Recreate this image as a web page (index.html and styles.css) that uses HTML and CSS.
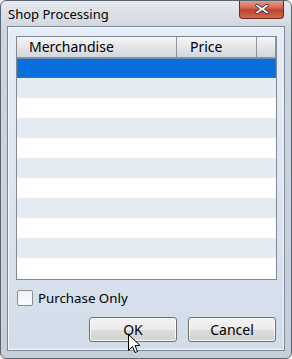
FILE: index.html
```html
<!doctype html>
<html>
	<head>
		<title>Shop Processing</title>
		<link rel="stylesheet" href="styles.css">
	</head>
	<body>
		<div class="window">
			<div class="titlebar">
				<span class="title">Shop Processing</span>
				<div class="close">
					<svg width="20" height="12" viewBox="0 0 20 12">
						<path d="M5 1 L10 4.5 L15 1 L17 2.5 L12.5 6 L17 9.5 L15 11 L10 7.5 L5 11 L3 9.5 L7.5 6 L3 2.5 Z" fill="#fff" stroke="#3a3a3a" stroke-width="1" stroke-linejoin="round"/>
					</svg>
				</div>
			</div>
			<div class="client">
				<div class="list">
					<div class="header">
						<div class="col c1">Merchandise</div>
						<div class="col c2">Price</div>
						<div class="col c3"></div>
					</div>
					<div class="row sel"></div>
					<div class="row alt"></div>
					<div class="row"></div>
					<div class="row alt"></div>
					<div class="row"></div>
					<div class="row alt"></div>
					<div class="row"></div>
					<div class="row alt"></div>
					<div class="row"></div>
					<div class="row alt"></div>
					<div class="row"></div>
				</div>
				<label class="check"><span class="box"></span>Purchase Only</label>
				<div class="buttons">
					<button class="btn">OK</button>
					<button class="btn">Cancel</button>
				</div>
			</div>
			<svg class="cursor" width="13" height="20" viewBox="0 0 13 20">
				<path d="M0.5 0.5 L0.5 16.5 L4.5 12.5 L7 18.5 L9.5 17.5 L7 11.5 L12 11.5 Z" fill="#fff" stroke="#000" stroke-width="1" stroke-linejoin="miter"/>
			</svg>
		</div>
	</body>
</html>
```
FILE: styles.css
```css
* {
	margin: 0px;
	padding: 0px;
	box-sizing: border-box;
}
body {
	font-family: "Noto Sans", "Open Sans", sans-serif;
	background: #fff;
}
.window {
	position: relative;
	width: 292px;
	height: 359px;
	border: 1px solid #5a6470;
	border-radius: 6px;
	background: linear-gradient(#e6e9ed, #cfd5dd 30px, #c6ced8);
	padding: 0px 6px 7px 6px;
	display: flex;
	flex-direction: column;
	overflow: hidden;
}
.titlebar {
	height: 26px;
	display: flex;
	align-items: flex-start;
	justify-content: space-between;
}
.title {
	font-size: 13px;
	color: #000;
	margin-top: 4px;
	margin-left: 1px;
}
.close {
	width: 45px;
	height: 19px;
	margin-top: -1px;
	margin-right: 1px;
	border: 1px solid #6e2a22;
	border-top: none;
	border-radius: 0px 0px 4px 4px;
	background: linear-gradient(#e9a497, #d4644f 45%, #c0412c 55%, #cf6a50);
	display: flex;
	align-items: center;
	justify-content: center;
}
.client {
	flex: 1;
	border: 1px solid #7b8593;
	box-shadow: inset 0px 0px 0px 1px #f4f8fc;
	background: linear-gradient(#e5edf8, #d2dde9);
	padding: 9px 7px 8px 8px;
	display: flex;
	flex-direction: column;
}
.list {
	height: 244px;
	border: 1px solid #828790;
	background: #fff;
	overflow: hidden;
}
.header {
	display: flex;
	height: 21px;
	border-bottom: 1px solid #8e959e;
	background: linear-gradient(#f6f6f6, #e4e6e9 50%, #d2d6db);
}
.col {
	font-size: 14px;
	line-height: 20px;
	color: #000;
	border-right: 1px solid #8e959e;
}
.c1 {
	width: 160px;
	padding-left: 12px;
}
.c2 {
	width: 80px;
	padding-left: 13px;
}
.c3 {
	width: 19px;
}
.row {
	height: 20px;
}
.alt {
	background: #e4ebf2;
}
.sel {
	background: #0a6fdc;
	border: 1px solid #4a6f96;
	border-top-color: #6a8bb0;
}
.check {
	display: flex;
	align-items: center;
	margin-top: 9px;
	margin-left: 1px;
	font-size: 13.3px;
	color: #000;
	height: 18px;
}
.box {
	width: 16px;
	height: 16px;
	border: 1px solid #8f8f8f;
	border-radius: 2px;
	background: linear-gradient(#f0f2f5, #fbfbfc);
	margin-right: 5px;
}
.buttons {
	display: flex;
	justify-content: flex-end;
	gap: 11px;
	margin-top: 10px;
	padding-right: 1px;
}
.btn {
	width: 88px;
	height: 25px;
	border: 1px solid #707070;
	border-radius: 3px;
	background: linear-gradient(#f3f3f3, #ebebeb 50%, #dcdcdc 51%, #d2d2d2);
	box-shadow: inset 0px 0px 0px 1px #fbfbfb;
	font-family: "Noto Sans", "Open Sans", sans-serif;
	font-size: 14px;
	color: #000;
}
.cursor {
	position: absolute;
	left: 127px;
	top: 333px;
}
```
